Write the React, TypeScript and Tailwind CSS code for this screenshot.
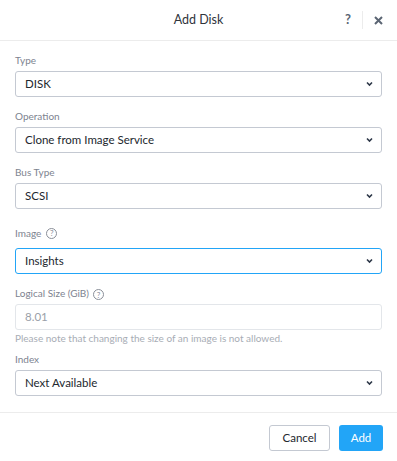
import React from 'react';

const font = { fontFamily: 'Lato, "Open Sans", sans-serif' };

function Chevron() {
  return (
    <svg width="7" height="5" viewBox="0 0 7 5" className="absolute right-[8px] top-1/2 -translate-y-1/2">
      <path d="M1 1l2.5 2.5L6 1" fill="none" stroke="#2d3748" strokeWidth="1.6" />
    </svg>
  );
}

function HelpIcon() {
  return (
    <span className="ml-[4px] mt-[3px] inline-flex h-[11px] w-[11px] items-center justify-center rounded-full border border-[#8a8f99] text-[8px] leading-none text-[#8a8f99]">
      ?
    </span>
  );
}

function Label({ text, help }: { text: string; help?: boolean }) {
  return (
    <div className="flex h-[14px] items-center text-[10px] text-[#7d838f]">
      {text}
      {help && <HelpIcon />}
    </div>
  );
}

function Select({ value, focus }: { value: string; focus?: boolean }) {
  return (
    <div
      className={`relative mt-[4px] flex h-[26px] items-center rounded-[3px] border bg-white pl-[9px] text-[11.5px] text-[#22272e] ${
        focus ? 'border-[#22a5f7]' : 'border-[#c4c9d2]'
      }`}
    >
      {value}
      <Chevron />
    </div>
  );
}

export default function App() {
  return (
    <div className="h-[461px] w-[397px] bg-white" style={font}>
      {/* Header */}
      <div className="relative flex h-[41px] items-center justify-center border-b border-[#ececec]">
        <span className="text-[12.5px] text-[#2f343b]">Add Disk</span>
        <div className="absolute right-[14px] top-0 flex h-full items-center">
          <span className="text-[13px] font-bold text-[#5b6573]">?</span>
          <div className="mx-[11px] h-[18px] w-px bg-[#ececec]" />
          <svg width="9" height="9" viewBox="0 0 9 9">
            <path d="M1 1l7 7M8 1L1 8" stroke="#5b6573" strokeWidth="2" />
          </svg>
        </div>
      </div>

      {/* Form */}
      <div className="px-[15px] pt-[12px]">
        <Label text="Type" />
        <Select value="DISK" />

        <div className="mt-[12px]">
          <Label text="Operation" />
          <Select value="Clone from Image Service" />
        </div>

        <div className="mt-[12px]">
          <Label text="Bus Type" />
          <Select value="SCSI" />
        </div>

        <div className="mt-[14px]">
          <div className="flex h-[20px] items-center text-[10px] text-[#7d838f]">
            Image
            <span className="ml-[5px] inline-flex h-[11px] w-[11px] items-center justify-center rounded-full border border-[#8a8f99] text-[8px] leading-none text-[#8a8f99]">
              ?
            </span>
          </div>
          <div className="mt-[5px]">
            <Select value="Insights" focus />
          </div>
        </div>

        <div className="mt-[12px]">
          <Label text="Logical Size (GiB)" help />
          <div className="mt-[4px] flex h-[26px] items-center rounded-[3px] border border-[#e3e6ea] bg-white pl-[9px] text-[11.5px] text-[#9aa0a8]">
            8.01
          </div>
          <div className="mt-[2px] text-[10px] leading-[12px] text-[#a8adb5]">
            Please note that changing the size of an image is not allowed.
          </div>
        </div>

        <div className="mt-[8px]">
          <Label text="Index" />
          <Select value="Next Available" />
        </div>
      </div>

      {/* Footer */}
      <div className="mt-[16px] flex justify-end gap-[9px] border-t border-[#ececec] px-[14px] pt-[12px]">
        <button className="h-[26px] w-[61px] rounded-[3px] border border-[#c4c9d2] bg-white text-[11.5px] text-[#22272e]">
          Cancel
        </button>
        <button className="h-[26px] w-[44px] rounded-[3px] bg-[#22a5f7] text-[11.5px] text-white">
          Add
        </button>
      </div>
    </div>
  );
}
